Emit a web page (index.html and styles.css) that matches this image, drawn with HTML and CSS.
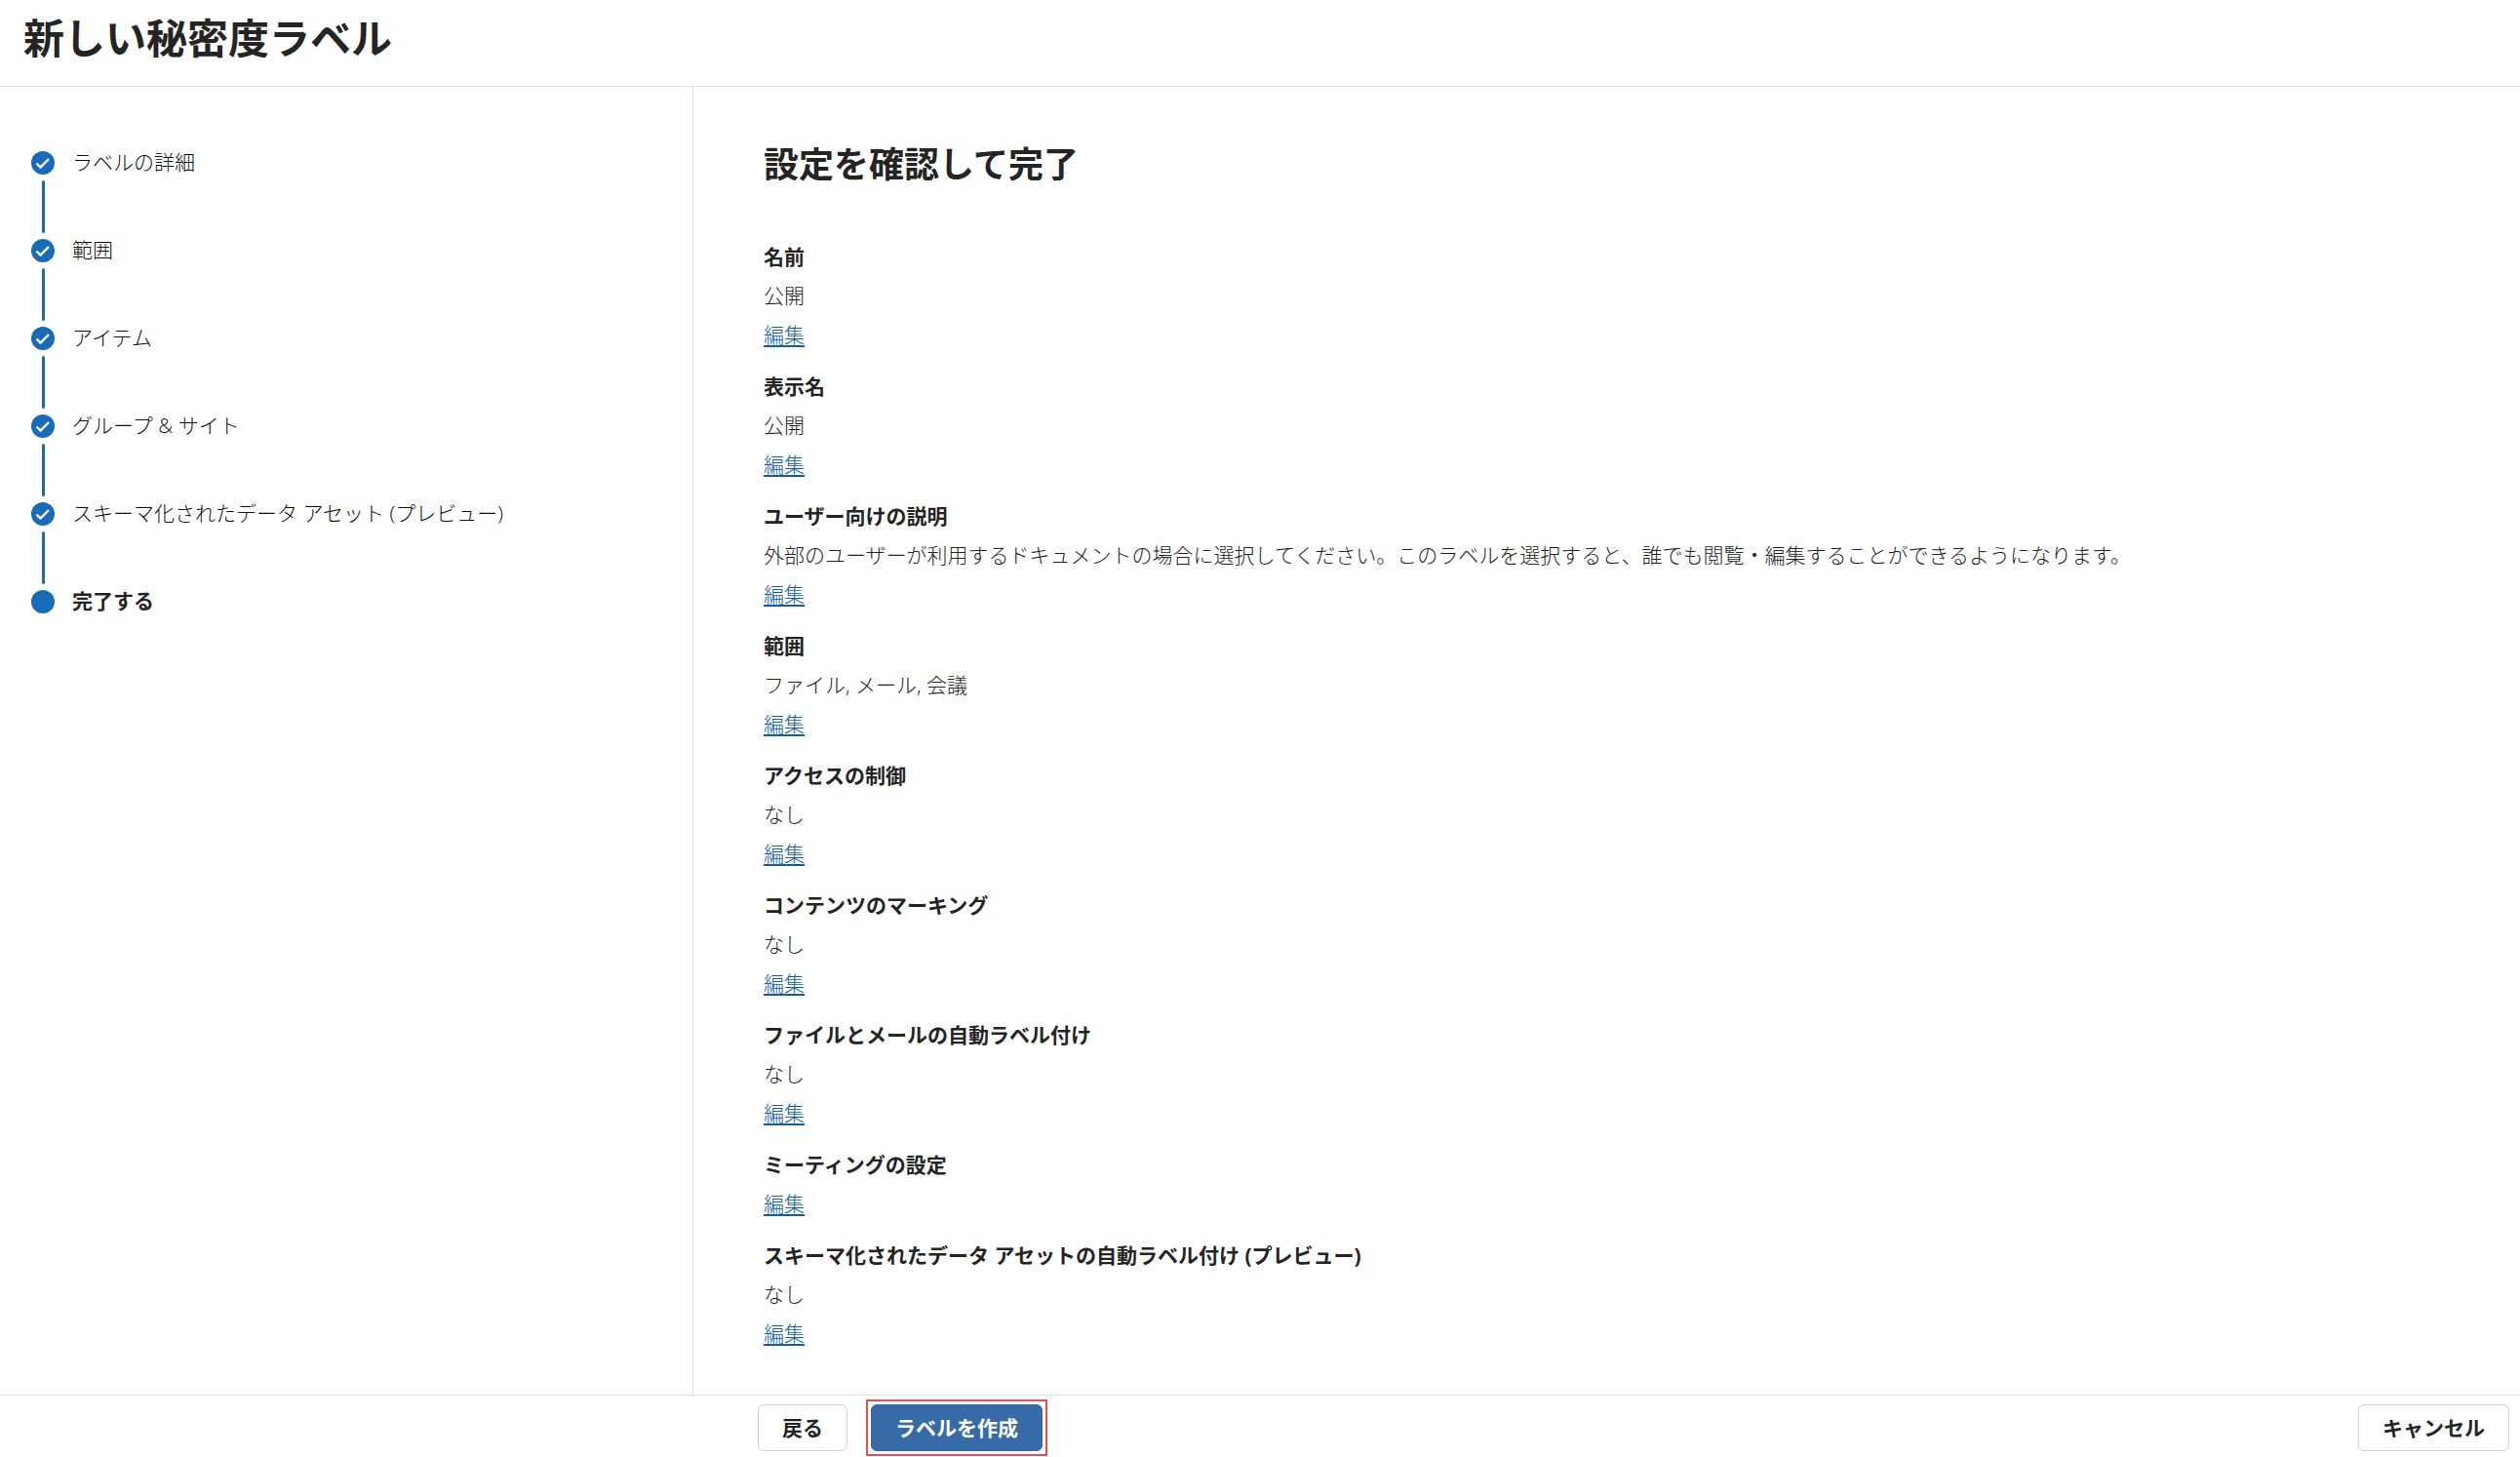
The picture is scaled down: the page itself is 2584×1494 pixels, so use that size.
FILE: index.html
```
<!DOCTYPE html>
<html lang="ja">
<head>
    <meta charset="UTF-8">
    <meta name="viewport" content="width=device-width, initial-scale=1.0">
    <title>新しい秘密度ラベル</title>
    <link rel="stylesheet" href="styles.css">
</head>
<body>
    <header class="header">
        <h1>新しい秘密度ラベル</h1>
    </header>
    <div class="main">
        <nav class="sidebar">
            <ol class="steps">
                <li class="step done">
                    <svg class="step-icon" viewBox="0 0 24 24"><circle cx="12" cy="12" r="12"/><path d="M5.5 12.5l4 4 8.5-8.5"/></svg>
                    <span>ラベルの詳細</span>
                </li>
                <li class="step done">
                    <svg class="step-icon" viewBox="0 0 24 24"><circle cx="12" cy="12" r="12"/><path d="M5.5 12.5l4 4 8.5-8.5"/></svg>
                    <span>範囲</span>
                </li>
                <li class="step done">
                    <svg class="step-icon" viewBox="0 0 24 24"><circle cx="12" cy="12" r="12"/><path d="M5.5 12.5l4 4 8.5-8.5"/></svg>
                    <span>アイテム</span>
                </li>
                <li class="step done">
                    <svg class="step-icon" viewBox="0 0 24 24"><circle cx="12" cy="12" r="12"/><path d="M5.5 12.5l4 4 8.5-8.5"/></svg>
                    <span>グループ &amp; サイト</span>
                </li>
                <li class="step done">
                    <svg class="step-icon" viewBox="0 0 24 24"><circle cx="12" cy="12" r="12"/><path d="M5.5 12.5l4 4 8.5-8.5"/></svg>
                    <span>スキーマ化されたデータ アセット (プレビュー)</span>
                </li>
                <li class="step current">
                    <svg class="step-icon" viewBox="0 0 24 24"><circle cx="12" cy="12" r="12"/></svg>
                    <span>完了する</span>
                </li>
            </ol>
        </nav>
        <main class="content">
            <h2>設定を確認して完了</h2>
            <section class="setting">
                <h3>名前</h3>
                <p>公開</p>
                <a href="#">編集</a>
            </section>
            <section class="setting">
                <h3>表示名</h3>
                <p>公開</p>
                <a href="#">編集</a>
            </section>
            <section class="setting">
                <h3>ユーザー向けの説明</h3>
                <p>外部のユーザーが利用するドキュメントの場合に選択してください。このラベルを選択すると、誰でも閲覧・編集することができるようになります。</p>
                <a href="#">編集</a>
            </section>
            <section class="setting">
                <h3>範囲</h3>
                <p>ファイル, メール, 会議</p>
                <a href="#">編集</a>
            </section>
            <section class="setting">
                <h3>アクセスの制御</h3>
                <p>なし</p>
                <a href="#">編集</a>
            </section>
            <section class="setting">
                <h3>コンテンツのマーキング</h3>
                <p>なし</p>
                <a href="#">編集</a>
            </section>
            <section class="setting">
                <h3>ファイルとメールの自動ラベル付け</h3>
                <p>なし</p>
                <a href="#">編集</a>
            </section>
            <section class="setting">
                <h3>ミーティングの設定</h3>
                <a href="#">編集</a>
            </section>
            <section class="setting">
                <h3>スキーマ化されたデータ アセットの自動ラベル付け (プレビュー)</h3>
                <p>なし</p>
                <a href="#">編集</a>
            </section>
        </main>
    </div>
    <footer class="footer">
        <button type="button" class="btn">戻る</button>
        <div class="highlight">
            <button type="button" class="btn primary">ラベルを作成</button>
        </div>
        <button type="button" class="btn cancel">キャンセル</button>
    </footer>
</body>
</html>
```
FILE: styles.css
```
* {
    box-sizing: border-box;
}
body {
    font-family: 'Open Sans', 'Noto Sans CJK JP', sans-serif;
    font-size: 21px;
    font-weight: 300;
    line-height: 28px;
    margin: 0;
    min-height: 100vh;
    display: flex;
    flex-direction: column;
    background-color: #fff;
    color: #242424;
}
h1, h2, h3, p {
    margin: 0;
}
.header {
    padding: 11px 24px 21px;
    border-bottom: 1px solid #e0e0e0;
}
.header h1 {
    font-size: 42px;
    font-weight: 700;
    line-height: 56px;
}
.main {
    display: flex;
    flex: 1;
}
.sidebar {
    flex: 0 0 711px;
    padding: 64px 32px;
    border-right: 1px solid #e0e0e0;
}
.steps {
    list-style: none;
    margin: 0;
    padding: 0;
}
.step {
    display: flex;
    gap: 18px;
    position: relative;
    height: 90px;
    color: #111;
    line-height: 26px;
}
/* line between two steps */
.step.done::after {
    content: '';
    position: absolute;
    left: 11px;
    top: 32px;
    width: 3px;
    height: 54px;
    border-radius: 2px;
    background-color: #186bb9;
}
.step-icon {
    width: 24px;
    height: 28px;
}
.step-icon circle {
    fill: #186bb9;
}
.step-icon path {
    fill: none;
    stroke: #fff;
    stroke-width: 2.4;
}
.step.current {
    color: #242424;
    font-weight: 700;
}
.content {
    flex: 1;
    padding: 56px 72px 24px;
}
.content h2 {
    font-size: 36px;
    font-weight: 700;
    line-height: 48px;
    margin-bottom: 56px;
}
.setting {
    display: flex;
    flex-direction: column;
    align-items: flex-start;
    gap: 12px;
    margin-bottom: 25px;
}
.setting h3 {
    font-size: 21px;
    font-weight: 700;
}
.setting p {
    color: #242424;
}
.setting a {
    color: #115ea3;
    text-decoration: underline;
    text-decoration-thickness: 2px;
    text-underline-offset: 3px;
}
.footer {
    display: flex;
    align-items: center;
    padding: 4px 11px 1px 777px;
    border-top: 1px solid #e0e0e0;
}
.btn {
    font: inherit;
    font-weight: 700;
    height: 48px;
    padding: 0 24px;
    border: 1px solid #d1d1d1;
    border-radius: 6px;
    background-color: #fff;
    color: #242424;
}
.primary {
    background-color: #366ba8;
    border-color: #366ba8;
    color: #fff;
}
.highlight {
    display: flex;
    margin-left: 19px;
    padding: 3px;
    border: 2px solid #ee4b4f;
}
.cancel {
    margin-left: auto;
}
```
